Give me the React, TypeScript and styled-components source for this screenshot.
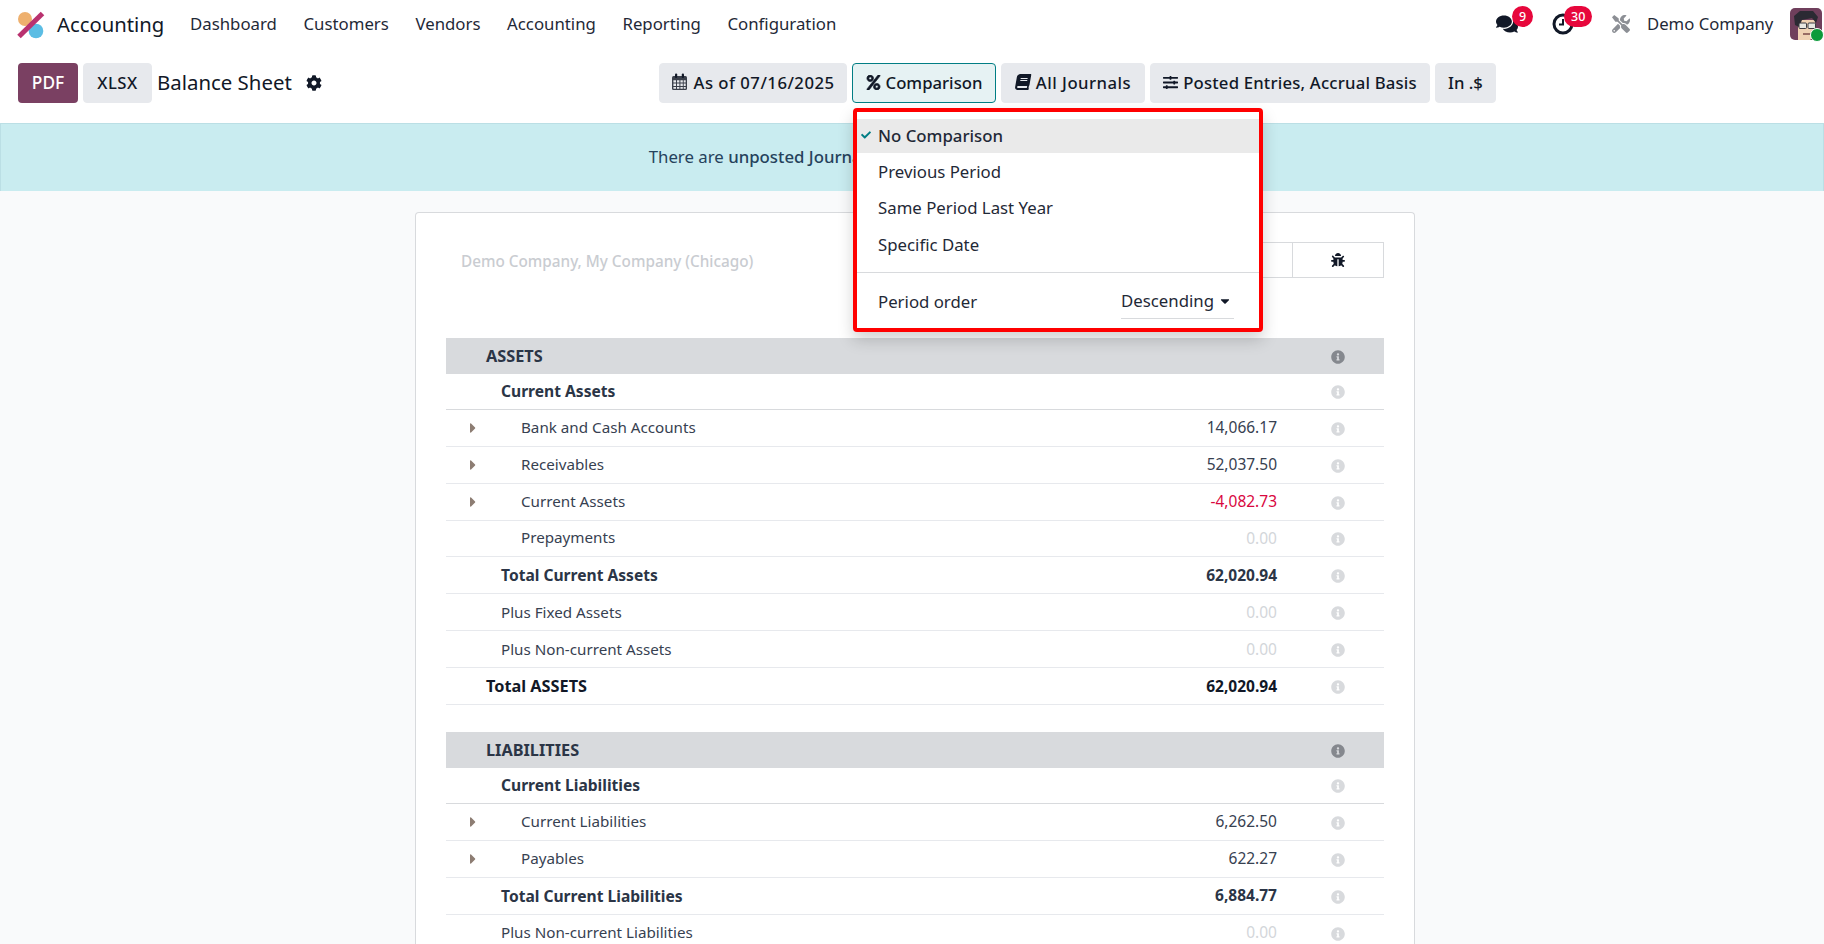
import React from 'react';
import styled, { createGlobalStyle } from 'styled-components';
import {
  FaBook,
  FaBug,
  FaCaretDown,
  FaCaretRight,
  FaCheck,
  FaCog,
  FaComments,
  FaInfoCircle,
  FaPercent,
  FaSlidersH,
  FaTools,
} from 'react-icons/fa';

const FONT = '"Noto Sans", "Open Sans", sans-serif';

const GlobalStyle = createGlobalStyle`
  html, body {
    margin: 0;
    padding: 0;
    background: #f9fafb;
  }
  * {
    box-sizing: border-box;
  }
`;

const NAV_ITEMS = ['Dashboard', 'Customers', 'Vendors', 'Accounting', 'Reporting', 'Configuration'];

type Kind = 'section' | 'group' | 'leaf' | 'total' | 'plus' | 'grand';
type Line = {
  kind: Kind;
  label: string;
  amount?: string;
  tone?: 'red' | 'zero';
  caret?: boolean;
  height: number;
};

const ASSETS: Line[] = [
  { kind: 'section', label: 'ASSETS', height: 35.5 },
  { kind: 'group', label: 'Current Assets', height: 36 },
  { kind: 'leaf', label: 'Bank and Cash Accounts', amount: '14,066.17', caret: true, height: 37 },
  { kind: 'leaf', label: 'Receivables', amount: '52,037.50', caret: true, height: 37 },
  { kind: 'leaf', label: 'Current Assets', amount: '-4,082.73', tone: 'red', caret: true, height: 37 },
  { kind: 'leaf', label: 'Prepayments', amount: '0.00', tone: 'zero', height: 36.5 },
  { kind: 'total', label: 'Total Current Assets', amount: '62,020.94', height: 37 },
  { kind: 'plus', label: 'Plus Fixed Assets', amount: '0.00', tone: 'zero', height: 37 },
  { kind: 'plus', label: 'Plus Non-current Assets', amount: '0.00', tone: 'zero', height: 37 },
  { kind: 'grand', label: 'Total ASSETS', amount: '62,020.94', height: 37 },
];

const LIABILITIES: Line[] = [
  { kind: 'section', label: 'LIABILITIES', height: 36 },
  { kind: 'group', label: 'Current Liabilities', height: 36 },
  { kind: 'leaf', label: 'Current Liabilities', amount: '6,262.50', caret: true, height: 37 },
  { kind: 'leaf', label: 'Payables', amount: '622.27', caret: true, height: 37 },
  { kind: 'total', label: 'Total Current Liabilities', amount: '6,884.77', height: 37 },
  { kind: 'plus', label: 'Plus Non-current Liabilities', amount: '0.00', tone: 'zero', height: 37 },
];

const INDENT: Record<Kind, number> = {
  section: 40,
  group: 55,
  leaf: 75,
  total: 55,
  plus: 55,
  grand: 40,
};

const LABEL_SIZE: Record<Kind, number> = {
  section: 16.3,
  group: 15.6,
  leaf: 15.2,
  total: 15.6,
  plus: 15.2,
  grand: 16.3,
};

const LABEL_LIFT: Record<Kind, number> = {
  section: 0,
  group: 0,
  leaf: 2,
  total: 0,
  plus: 1,
  grand: 0,
};

const FILTER_OPTIONS = ['No Comparison', 'Previous Period', 'Same Period Last Year', 'Specific Date'];

const Logo = () => (
  <svg width="30" height="30" viewBox="0 0 30 30">
    <circle cx="10" cy="10" r="7" fill="#eeb06e" />
    <circle cx="21" cy="22" r="7.3" fill="#5bbde4" />
    <path d="M4 27.5 L27.5 4.5" stroke="#b9326f" strokeWidth="5" />
  </svg>
);

const ClockIcon = () => (
  <svg width="22" height="22" viewBox="0 0 22 22">
    <circle cx="11" cy="11" r="9" fill="none" stroke="#111827" strokeWidth="3" />
    <path d="M11 6v5.5H7" fill="none" stroke="#111827" strokeWidth="2" />
  </svg>
);

const CalendarIcon = () => (
  <svg width="17" height="18" viewBox="0 0 17 18">
    <rect x="1" y="3" width="15" height="14" rx="1.5" fill="#3a3f4a" />
    <rect x="4" y="0.5" width="2.2" height="4.5" rx="1" fill="#111827" />
    <rect x="10.8" y="0.5" width="2.2" height="4.5" rx="1" fill="#111827" />
    <path
      d="M2.4 7.2h2.6v2.4H2.4zM6 7.2h2.4v2.4H6zM9.4 7.2h2.4v2.4H9.4zM12.7 7.2h2v2.4h-2zM2.4 10.6h2.6V13H2.4zM6 10.6h2.4V13H6zM9.4 10.6h2.4V13H9.4zM12.7 10.6h2V13h-2zM2.4 14h2.6v1.8H2.4zM6 14h2.4v1.8H6zM9.4 14h2.4v1.8H9.4zM12.7 14h2v1.8h-2z"
      fill="#e7e9ed"
    />
  </svg>
);

const Face = () => (
  <svg width="32" height="32" viewBox="0 0 32 32">
    <rect width="32" height="32" rx="5" fill="#6f3f5c" />
    <path d="M8 32 V12 H25 V27 L20 32Z" fill="#f0d2b4" />
    <path d="M5 17 L4 8 L10 3 L23 3 L28 9 L26 15 L22 10 L12 12 L9 19Z" fill="#2b2a33" />
    <rect x="9" y="15" width="7.5" height="5.5" rx="1" fill="#e7e7e2" stroke="#3a3a40" />
    <rect x="18" y="15" width="7.5" height="5.5" rx="1" fill="#e7e7e2" stroke="#3a3a40" />
    <path d="M13 26 H21" stroke="#7d4a4a" strokeWidth="1.5" />
  </svg>
);

const App = () => (
  <Page>
    <GlobalStyle />
    <Navbar>
      <Brand>
        <Logo />
        <BrandName>Accounting</BrandName>
      </Brand>
      <NavMenu>
        {NAV_ITEMS.map((item) => (
          <NavItem key={item}>{item}</NavItem>
        ))}
      </NavMenu>
      <Systray>
        <TrayIcon $width={56}>
          <FaComments size={22} color="#111827" />
          <Badge $left={16}>9</Badge>
        </TrayIcon>
        <TrayIcon $width={60}>
          <ClockIcon />
          <Badge $left={12}>30</Badge>
        </TrayIcon>
        <ToolsSlot>
          <FaTools size={18} color="#8c8f95" />
        </ToolsSlot>
        <CompanyName>Demo Company</CompanyName>
        <Avatar>
          <Face />
          <OnlineDot />
        </Avatar>
      </Systray>
    </Navbar>

    <Toolbar>
      <ActionGroup>
        <PrimaryButton>PDF</PrimaryButton>
        <FilterButton $width={69} $tracking={0.5}>
          XLSX
        </FilterButton>
        <ReportTitle>Balance Sheet</ReportTitle>
        <FaCog size={16} color="#111827" />
      </ActionGroup>
      <FilterGroup>
        <FilterButton $width={188} $tracking={0.5}>
          <CalendarIcon />
          As of 07/16/2025
        </FilterButton>
        <ComparisonWrap>
          <FilterButton $width={144} $active>
            <FaPercent size={15} stroke="currentColor" strokeWidth={24} />
            Comparison
          </FilterButton>
          <Dropdown>
            {FILTER_OPTIONS.map((option, i) => (
              <Option key={option} $selected={i === 0}>
                {i === 0 && (
                  <CheckSlot>
                    <FaCheck size={10} color="#017e84" />
                  </CheckSlot>
                )}
                {option}
              </Option>
            ))}
            <MenuDivider />
            <OrderRow>
              Period order
              <OrderSelect>
                Descending
                <FaCaretDown size={14} color="#111827" />
              </OrderSelect>
            </OrderRow>
          </Dropdown>
        </ComparisonWrap>
        <FilterButton $width={144} $tracking={0.5}>
          <SlantedBook size={16} />
          All Journals
        </FilterButton>
        <FilterButton $width={280} $tracking={0.2}>
          <FaSlidersH size={15} />
          Posted Entries, Accrual Basis
        </FilterButton>
        <FilterButton $width={61}>In .$</FilterButton>
      </FilterGroup>
    </Toolbar>

    <Alert>
      <span>
        There are <strong>unposted Journal Entries</strong> prior or included in this period.
      </span>
    </Alert>

    <Content>
      <Card>
        <CardHeader>
          <CompanyLine>Demo Company, My Company (Chicago)</CompanyLine>
          <HeaderButtons>
            <HeaderButton />
            <HeaderButton>
              <FaBug size={14} color="#111827" />
            </HeaderButton>
          </HeaderButtons>
        </CardHeader>
        <ReportBlock lines={ASSETS} />
        <BlockGap />
        <ReportBlock lines={LIABILITIES} />
      </Card>
    </Content>
  </Page>
);

const ReportBlock = ({ lines }: { lines: Line[] }) => (
  <>
    {lines.map((line) => (
      <Row key={line.kind + line.label} $kind={line.kind} $height={line.height}>
        <Indent $width={INDENT[line.kind]}>
          {line.caret && <FaCaretRight size={16} color="#8d7d73" />}
        </Indent>
        <Label $kind={line.kind}>{line.label}</Label>
        {line.amount && <Amount $tone={line.tone}>{line.amount}</Amount>}
        <InfoCell $kind={line.kind}>
          <FaInfoCircle size={14} />
        </InfoCell>
      </Row>
    ))}
  </>
);

const Page = styled.div`
  width: 1824px;
  height: 944px;
  overflow: hidden;
  display: flex;
  flex-flow: column;
  background: #f9fafb;
  font-family: ${FONT};
  color: #1f2937;
`;

const Navbar = styled.div`
  height: 48px;
  flex: none;
  display: flex;
  align-items: center;
  background: #fff;
  padding-left: 15px;
`;

const Brand = styled.div`
  display: flex;
  align-items: center;
  gap: 12px;
  width: 175px;
`;

const BrandName = styled.div`
  font-size: 20.3px;
  color: #111827;
  padding-bottom: 1px;
`;

const NavMenu = styled.div`
  display: flex;
  gap: 26.6px;
  padding-bottom: 2px;
`;

const NavItem = styled.div`
  font-size: 16.8px;
  color: #1f2937;
`;

const Systray = styled.div`
  margin-left: auto;
  display: flex;
  align-items: center;
`;

const TrayIcon = styled.div<{ $width: number }>`
  position: relative;
  width: ${(p) => p.$width}px;
  height: 24px;
  display: flex;
  align-items: center;
`;

const Badge = styled.span<{ $left: number }>`
  position: absolute;
  left: ${(p) => p.$left}px;
  top: -6px;
  min-width: 21px;
  height: 21px;
  padding: 0 7px;
  border-radius: 11px;
  background: #e7073c;
  color: #fff;
  font-size: 12.5px;
  font-weight: 500;
  line-height: 21px;
  text-align: center;
`;

const ToolsSlot = styled.div`
  width: 35px;
  display: flex;
  margin-top: -1px;
`;

const CompanyName = styled.div`
  font-size: 16.7px;
  color: #1f2937;
  width: 143px;
  padding-bottom: 2px;
  white-space: nowrap;
`;

const Avatar = styled.div`
  position: relative;
  width: 34px;
  height: 32px;
  display: flex;
`;

const OnlineDot = styled.span`
  position: absolute;
  right: 0;
  bottom: -2px;
  width: 14px;
  height: 14px;
  border-radius: 50%;
  background: #0b9a3a;
  border: 1px solid #fff;
`;

const Toolbar = styled.div`
  height: 75px;
  flex: none;
  display: grid;
  grid-template-columns: 641px 1fr;
  padding: 15px 0 0 18px;
  background: #fff;
`;

const ActionGroup = styled.div`
  display: flex;
  align-items: flex-start;
  gap: 5px;

  & > svg {
    margin: 12px 0 0 9px;
  }
`;

const PrimaryButton = styled.button`
  width: 60px;
  height: 40px;
  padding: 0 0 2px;
  border: none;
  border-radius: 4px;
  background: #7a4062;
  color: #fff;
  font-family: ${FONT};
  font-size: 17.3px;
  font-weight: 500;
`;

const ReportTitle = styled.div`
  font-size: 20.4px;
  line-height: 38px;
  color: #111827;
`;

const FilterGroup = styled.div`
  display: flex;
  align-items: flex-start;
  gap: 5px;
`;

const FilterButton = styled.button<{ $active?: boolean; $width: number; $tracking?: number }>`
  width: ${(p) => p.$width}px;
  height: 40px;
  display: flex;
  align-items: center;
  justify-content: center;
  gap: 5px;
  padding: 0 0 2px;
  border-radius: 4px;
  border: 1px solid ${(p) => (p.$active ? '#017e84' : '#e7e9ed')};
  background: ${(p) => (p.$active ? '#e6f2f3' : '#e7e9ed')};
  color: #111827;
  font-family: ${FONT};
  font-size: 16.7px;
  font-weight: 500;
  letter-spacing: ${(p) => p.$tracking ?? 0}px;
  white-space: nowrap;
`;

const SlantedBook = styled(FaBook)`
  transform: skewX(-10deg);
`;

const ComparisonWrap = styled.div`
  position: relative;
`;

const Dropdown = styled.div`
  position: absolute;
  z-index: 2;
  top: 45px;
  left: 1px;
  width: 410px;
  height: 224px;
  padding-top: 7px;
  display: flex;
  flex-flow: column;
  gap: 2.4px;
  background: #fff;
  border: 4px solid #ff0000;
  border-radius: 4px;
  box-shadow: 0 8px 16px rgba(0, 0, 0, 0.18);
`;

const Option = styled.div<{ $selected?: boolean }>`
  position: relative;
  height: 34px;
  flex: none;
  display: flex;
  align-items: center;
  padding: 0 0 2px 21px;
  background: ${(p) => (p.$selected ? '#eaeaea' : 'transparent')};
  color: #1f2937;
  font-size: 16.8px;
  font-weight: ${(p) => (p.$selected ? 500 : 400)};
`;

const CheckSlot = styled.span`
  position: absolute;
  left: 4px;
  display: flex;
`;

const MenuDivider = styled.div`
  height: 1px;
  flex: none;
  margin-top: 7px;
  background: #d8dadd;
`;

const OrderRow = styled.div`
  margin-top: 10px;
  display: flex;
  align-items: flex-start;
  justify-content: space-between;
  padding: 0 25px 0 21px;
  font-size: 16.8px;
  color: #1f2937;
  line-height: 34px;
`;

const OrderSelect = styled.div`
  width: 113px;
  height: 34px;
  display: flex;
  align-items: center;
  justify-content: space-between;
  padding-right: 2px;
  border-bottom: 1px solid #d8dadd;
`;

const Alert = styled.div`
  height: 68px;
  flex: none;
  display: flex;
  align-items: center;
  justify-content: center;
  padding-bottom: 2px;
  background: #c9ecf0;
  border: 1px solid #bbdfe5;
  border-bottom: none;
  color: #25425c;
  font-size: 16.8px;

  strong {
    font-weight: 500;
  }
`;

const Content = styled.div`
  flex: 1;
  min-height: 0;
  display: flex;
  justify-content: center;
  padding: 21px 0 0 6px;
`;

const Card = styled.div`
  width: 1000px;
  padding: 0 30px;
  background: #fff;
  border: 1px solid #d8dadd;
  border-bottom: none;
  border-radius: 4px 4px 0 0;
`;

const CardHeader = styled.div`
  height: 125px;
  padding: 29px 0 0 15px;
  display: flex;
  justify-content: space-between;
  align-items: flex-start;
`;

const CompanyLine = styled.div`
  font-size: 15.3px;
  line-height: 39px;
  color: #c9ccd1;
  font-weight: 500;
`;

const HeaderButtons = styled.div`
  display: flex;
`;

const HeaderButton = styled.div`
  width: 92px;
  height: 36px;
  margin-left: -1px;
  display: flex;
  align-items: center;
  justify-content: center;
  border: 1px solid #d8dadd;
`;

const BlockGap = styled.div`
  height: 26.5px;
`;

const Row = styled.div<{ $kind: Kind; $height: number }>`
  height: ${(p) => p.$height}px;
  display: flex;
  align-items: center;
  font-size: 15.2px;
  font-weight: ${(p) => (['section', 'group', 'total', 'grand'].includes(p.$kind) ? 700 : 400)};
  color: ${(p) => (p.$kind === 'grand' ? '#111827' : p.$kind === 'plus' || p.$kind === 'leaf' ? '#374151' : '#2b3546')};
  background: ${(p) => (p.$kind === 'section' ? '#d8dadd' : 'transparent')};
  border-bottom: ${(p) => (p.$kind === 'section' ? 'none' : p.$kind === 'group' ? '1px solid #d8dadd' : '1px solid #e7e9ed')};
`;

const Indent = styled.div<{ $width: number }>`
  width: ${(p) => p.$width}px;
  flex: none;
  padding-left: 19px;
  display: flex;
`;

const Label = styled.div<{ $kind: Kind }>`
  flex: 1;
  font-size: ${(p) => LABEL_SIZE[p.$kind]}px;
  padding-bottom: ${(p) => LABEL_LIFT[p.$kind]}px;
`;

const Amount = styled.div<{ $tone?: 'red' | 'zero' }>`
  color: ${(p) => (p.$tone === 'red' ? '#d9083f' : p.$tone === 'zero' ? '#d3d6da' : 'inherit')};
  font-size: 15.5px;
  padding-bottom: 1px;
`;

const InfoCell = styled.div<{ $kind: Kind }>`
  width: 107px;
  flex: none;
  padding: 2px 0 0 54px;
  display: flex;
  color: ${(p) => (p.$kind === 'section' ? '#85888e' : '#d8dadd')};
`;

export default App;
